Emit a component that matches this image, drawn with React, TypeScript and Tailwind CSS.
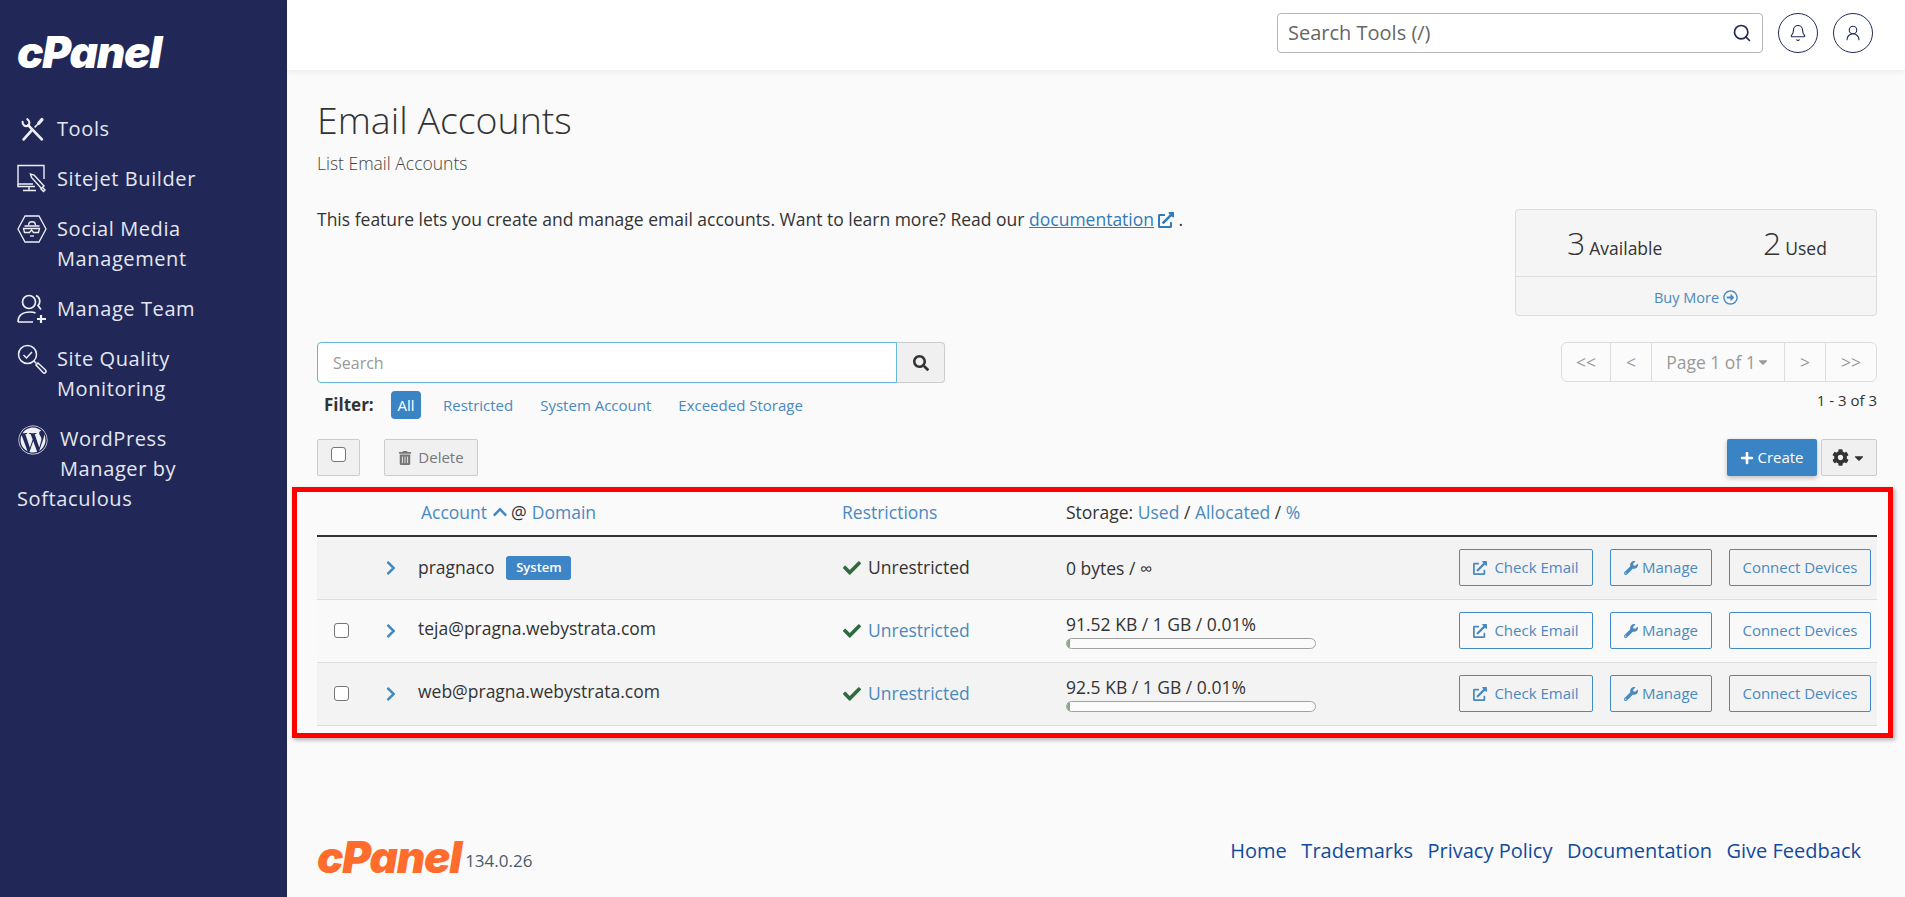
import { Bell, Search, UserRound } from "lucide-react";
import {
  FaCaretDown,
  FaCheck,
  FaChevronRight,
  FaChevronUp,
  FaCog,
  FaExternalLinkAlt,
  FaPlus,
  FaRegArrowAltCircleRight,
  FaSearch,
  FaTrashAlt,
  FaWordpress,
  FaWrench,
} from "react-icons/fa";

const font = "font-['Open_Sans',sans-serif]";

function ToolsIcon() {
  return (
    <svg viewBox="0 0 24 24" className="h-[25px] w-[25px]" fill="none" stroke="#eef0f6" strokeWidth="2" strokeLinecap="round">
      <path d="M8 8 21 21.500" strokeWidth="2.600" />
      <path d="M2.500 4.500c-.5 3 2.500 5.500 5.500 3.500 1.500-1.500 1.500-4-1-6" />
      <path d="M11 13 3.500 21.500" strokeWidth="2.600" />
      <path d="m14.500 9.500 3-3" strokeWidth="1.500" />
      <path d="m18 6 3-3.500" strokeWidth="3.200" />
    </svg>
  );
}

function SitejetIcon() {
  return (
    <svg viewBox="0 0 30 30" className="h-[30px] w-[30px]" fill="none" stroke="#eef0f6" strokeWidth="1.400">
      <path d="M27 15V1.500H1v18.500h15" />
      <path d="M1 20v2.500h17M12 23v3M6 26.500h13" />
      <path d="m17 11 10 11-2.500 2.500-10-11-1-3.500z" />
      <path d="m25 23 3 3-1.500 1.500-3-3" />
    </svg>
  );
}

function SocialIcon() {
  return (
    <svg viewBox="0 0 30 28" className="h-[28px] w-[30px]" fill="none" stroke="#eef0f6" strokeWidth="1.300">
      <path d="M8 1h14l7 13-7 13H8L1 14z" />
      <path d="M11.500 10.500c0-5 7-5 7 0" />
      <path d="M7.500 11h15M6.500 13.500l1 4h5l2-2.500 2 2.500h5l1-4z" />
      <path d="M13 21h4" />
    </svg>
  );
}

function TeamIcon() {
  return (
    <svg viewBox="0 0 30 30" className="h-[30px] w-[30px]" fill="none" stroke="#eef0f6" strokeWidth="1.700">
      <circle cx="12" cy="8" r="6.500" />
      <path d="M19 1.500c4 1.500 5 7 2 10l3 4M1 28c0-7 5-10 12-10 2 0 4 .3 5.500 1M1 28h15" />
      <path d="M24 21v8M20 25h9" strokeWidth="2.200" />
    </svg>
  );
}

function QualityIcon() {
  return (
    <svg viewBox="0 0 30 30" className="h-[30px] w-[30px]" fill="none" stroke="#eef0f6" strokeWidth="1.500">
      <circle cx="10.500" cy="10.500" r="9" />
      <path d="m6.500 11 3 3 5.500-6" />
      <path d="m17 17 2.500 2.500" />
      <path d="m19 21 2-2 7.500 7a1.500 1.500 0 0 1-2.500 2.500z" />
    </svg>
  );
}

function NavItem({ icon, lines }: { icon: React.ReactNode; lines: string[] }) {
  return (
    <div>
      <div className="float-left flex h-[30px] w-[40px] items-center">{icon}</div>
      <div className="pl-[40px]">
        {lines.map((line) => (
          <div key={line}>{line}</div>
        ))}
      </div>
    </div>
  );
}

function Sidebar() {
  return (
    <aside className="w-[287px] shrink-0 bg-[#212857] pl-[17px] pt-[29px] text-[20px] leading-[30px] tracking-[0.6px] text-[#e4e7f1]">
      <div className="h-[85.400px] font-['Inter',sans-serif] text-[44px] font-black italic leading-[46px] tracking-[-1.2px] text-white">
        cPanel
      </div>
      <nav className="flex flex-col gap-[20px]">
        <NavItem icon={<span className="ml-[3px]"><ToolsIcon /></span>} lines={["Tools"]} />
        <NavItem icon={<SitejetIcon />} lines={["Sitejet Builder"]} />
        <NavItem icon={<SocialIcon />} lines={["Social Media", "Management"]} />
        <NavItem icon={<TeamIcon />} lines={["Manage Team"]} />
        <NavItem icon={<QualityIcon />} lines={["Site Quality", "Monitoring"]} />
        <div>
          <div className="float-left mr-[11px] flex h-[60px] w-[32px] items-start pl-[1px] pt-[1px]">
            <FaWordpress className="text-[30px] text-[#eef0f6]" />
          </div>
          WordPress
          <br />
          Manager by
          <br />
          Softaculous
        </div>
      </nav>
    </aside>
  );
}

function Header() {
  return (
    <header className="flex h-[70px] shrink-0 items-center justify-end gap-[15px] bg-white pb-[4px] pr-[32px] shadow-[0_2px_6px_rgba(0,0,0,0.06)]">
      <div className="flex h-[40px] w-[486px] items-center justify-between rounded-[4px] border border-[#b5b5b5] pl-[10px] pr-[10px] text-[20px] text-[#666]">
        <span>Search Tools (/)</span>
        <Search className="size-[20px] text-[#222a5b]" strokeWidth={2} />
      </div>
      <button className="flex size-[40px] items-center justify-center rounded-full border border-[#222a5b] text-[#222a5b]">
        <Bell className="size-[18px]" strokeWidth={1.500} />
      </button>
      <button className="flex size-[40px] items-center justify-center rounded-full border border-[#222a5b] text-[#222a5b]">
        <UserRound className="size-[18px]" strokeWidth={1.500} />
      </button>
    </header>
  );
}

function OutlineButton({ children, width }: { children: React.ReactNode; width: string }) {
  return (
    <button className={`flex h-[37px] items-center justify-center gap-[4px] rounded-[2px] border border-[#428bca] text-[15px] text-[#4a89c0] ${width}`}>
      {children}
    </button>
  );
}

interface Account {
  name: string;
  system?: boolean;
  usage: string;
  bar?: boolean;
}

const accounts: Account[] = [
  { name: "pragnaco", system: true, usage: "0 bytes / ∞" },
  { name: "teja@pragna.webystrata.com", usage: "91.52 KB / 1 GB / 0.01%", bar: true },
  { name: "web@pragna.webystrata.com", usage: "92.5 KB / 1 GB / 0.01%", bar: true },
];

function AccountRow({ account, index }: { account: Account; index: number }) {
  return (
    <div
      className={`flex h-[63px] items-center border-b border-[#dedede] last:border-b-0 ${index % 2 === 0 ? "bg-[#f3f3f3]" : "bg-[#f9f9f9]"}`}
    >
      <div className="flex w-[66px] justify-center pb-[2px] pr-[18px]">
        {!account.system && <span className="mr-[-1px] h-[15px] w-[15px] rounded-[3px] border border-[#767676] bg-white" />}
      </div>
      <div className="w-[35px]">
        <FaChevronRight className="text-[16px] text-[#3f87c5]" />
      </div>
      <div className={`flex w-[425px] items-center text-[17.500px] text-[#333] ${account.system ? "pb-[2px]" : "pb-[5px]"}`}>
        {account.name}
        {account.system && (
          <span className="ml-[12px] mt-[2px] flex h-[24px] w-[65px] items-center justify-center rounded-[3px] bg-[#3d85c6] text-[13px] font-semibold text-white">
            System
          </span>
        )}
      </div>
      <div className="flex w-[223px] items-center gap-[7px] pb-[1px] text-[17.500px]">
        <FaCheck className="text-[18px] text-[#2f6b3c]" />
        <span className={account.system ? "text-[#333]" : "text-[#4a89c0]"}>Unrestricted</span>
      </div>
      <div className="w-[393px] text-[17.500px] leading-[20px] text-[#333]">
        <div className={account.bar ? "" : "-mt-[1px]"}>{account.usage}</div>
        {account.bar && (
          <div className="mt-[4px] h-[11px] w-[250px] overflow-hidden rounded-[6px] border border-[#a0a0a0] bg-[#fbfbfb]">
            <div className="h-full w-[3px] bg-[#7fae7f]" />
          </div>
        )}
      </div>
      <div className="-mt-[1px] flex items-center gap-[17px]">
        <OutlineButton width="w-[134px]">
          <FaExternalLinkAlt className="text-[14px]" />
          <span className="ml-[3px]">Check Email</span>
        </OutlineButton>
        <OutlineButton width="w-[102px]">
          <FaWrench className="text-[14px]" />
          Manage
        </OutlineButton>
        <OutlineButton width="w-[142px]">Connect Devices</OutlineButton>
      </div>
    </div>
  );
}

function AccountsTable() {
  return (
    <div className="relative mt-[16px]">
      <div className="flex h-[45px] items-center border-b-2 border-[#333] pb-[3px] text-[17.500px] text-[#4a89c0]">
        <div className="flex w-[525px] items-center pl-[104px]">
          Account
          <FaChevronUp className="ml-[5px] text-[16px] text-[#3f87c5]" />
          <span className="ml-[3px] text-[#333]">@</span>
          <span className="ml-[5px]">Domain</span>
        </div>
        <div className="w-[224px]">Restrictions</div>
        <div>
          <span className="text-[#333]">Storage: </span>Used<span className="text-[#333]"> / </span>Allocated
          <span className="text-[#333]"> / </span>%
        </div>
      </div>
      {accounts.map((account, index) => (
        <AccountRow key={account.name} account={account} index={index} />
      ))}
      <div className="pointer-events-none absolute -bottom-[12px] -left-[25px] -right-[16px] -top-[5px] border-[5px] border-[#f00] shadow-[2px_2px_4px_rgba(0,0,0,0.3)]" />
    </div>
  );
}

function Pagination() {
  return (
    <div className="flex h-[40px] rounded-[6px] border border-[#ddd] bg-[#fbfbfb] text-[17.500px] text-[#999]">
      <div className="flex w-[49px] items-center justify-center border-r border-[#ddd]">&lt;&lt;</div>
      <div className="flex w-[41px] items-center justify-center border-r border-[#ddd]">&lt;</div>
      <div className="flex w-[133px] items-center justify-center border-r border-[#ddd]">
        Page 1 of 1<FaCaretDown className="text-[14px]" />
      </div>
      <div className="flex w-[41px] items-center justify-center border-r border-[#ddd]">&gt;</div>
      <div className="flex w-[50px] items-center justify-center">&gt;&gt;</div>
    </div>
  );
}

function Footer() {
  return (
    <footer className="mt-auto flex h-[64px] justify-between pl-[30px] pr-[44px] pt-[1px]">
      <div className="flex items-start">
        <span className="font-['Inter',sans-serif] text-[44px] font-black italic leading-[46px] tracking-[-1.2px] text-[#ff6c2c]">cPanel</span>
        <span className="ml-[4px] mt-[15px] text-[17px] leading-[24px] text-[#4b5a6b]">134.0.26</span>
      </div>
      <div className="flex gap-[14.500px] pt-[5px] text-[20px] leading-[24px] text-[#124a9c]">
        <span>Home</span>
        <span>Trademarks</span>
        <span>Privacy Policy</span>
        <span>Documentation</span>
        <span>Give Feedback</span>
      </div>
    </footer>
  );
}

export default function App() {
  return (
    <div className={`flex h-screen overflow-hidden bg-[#fafafa] ${font}`}>
      <Sidebar />
      <main className="flex min-w-0 flex-1 flex-col">
        <Header />
        <div className="pl-[30px] pr-[28px]">
          <h1 className="mt-[30px] text-[37.500px] font-light leading-[40px] text-[#333]">Email Accounts</h1>
          <p className="mt-[13px] text-[17.500px] font-light leading-[20px] text-[#444]">List Email Accounts</p>

          <div className="mt-[36px] flex items-start justify-between">
            <p className="text-[17.500px] leading-[20px] text-[#333]">
              This feature lets you create and manage email accounts. Want to learn more? Read our{" "}
              <span className="text-[#337ab7] underline">documentation</span>
              <FaExternalLinkAlt className="ml-[4px] inline text-[16px] align-[-2px] text-[#337ab7]" /> .
            </p>
            <div className="h-[107px] w-[362px] rounded-[4px] border border-[#ddd] bg-[#f5f5f5]">
              <div className="flex h-[67px] items-center border-b border-[#ddd] text-[17.500px] text-[#333]">
                <div className="ml-[51px] flex w-[196px] items-baseline">
                  <span className="mr-[4px] text-[32px] font-light leading-[40px]">3</span>Available
                </div>
                <div className="flex items-baseline">
                  <span className="mr-[4px] text-[32px] font-light leading-[40px]">2</span>Used
                </div>
              </div>
              <div className="flex h-[38px] items-center justify-center gap-[4px] pt-[3px] text-[14.500px] text-[#4a89c0]">
                Buy More <FaRegArrowAltCircleRight className="text-[15px]" />
              </div>
            </div>
          </div>

          <div className="mt-[26px] flex items-start justify-between">
            <div>
              <div className="flex h-[41px]">
                <div className="flex w-[580px] items-center rounded-l-[4px] border border-[#66b7dc] bg-white pl-[15px] text-[16px] text-[#999]">Search</div>
                <div className="flex w-[48px] items-center justify-center rounded-r-[4px] border border-l-0 border-[#ccc] bg-[#f0f0f0] text-[#333]">
                  <FaSearch className="text-[16px]" />
                </div>
              </div>
              <div className="mt-[8px] flex h-[28px] items-center text-[15px] text-[#4a89c0]">
                <span className="ml-[7px] w-[67px] text-[17px] font-bold text-[#333]">Filter:</span>
                <span className="flex h-[28px] w-[30px] items-center justify-center rounded-[4px] bg-[#3a83c4] text-white">All</span>
                <span className="ml-[22px]">Restricted</span>
                <span className="ml-[27px]">System Account</span>
                <span className="ml-[27px]">Exceeded Storage</span>
              </div>
            </div>
            <div className="flex flex-col items-end">
              <Pagination />
              <div className="mt-[8px] text-[15px] leading-[20px] text-[#333]">1 - 3 of 3</div>
            </div>
          </div>

          <div className="mt-[20px] flex h-[37px] items-stretch justify-between">
            <div className="flex gap-[24px]">
              <div className="flex w-[43px] justify-center rounded-[2px] border border-[#ccc] bg-[#f0f0f0] pt-[7px]">
                <span className="h-[15px] w-[15px] rounded-[3px] border border-[#767676] bg-white" />
              </div>
              <div className="flex w-[94px] items-center justify-center gap-[6px] rounded-[2px] border border-[#ccc] bg-[#f0f0f0] text-[15px] text-[#777]">
                <FaTrashAlt className="text-[14px]" />
                Delete
              </div>
            </div>
            <div className="flex gap-[4px]">
              <div className="flex w-[90px] items-center justify-center gap-[3px] rounded-[2px] bg-[#3a83c4] text-[15px] text-white shadow-[0_2px_5px_rgba(0,0,0,0.25)]">
                <FaPlus className="text-[14px]" />
                Create
              </div>
              <div className="flex w-[56px] items-center justify-center gap-[3px] rounded-[2px] border border-[#ccc] bg-[#f0f0f0] text-[#333]">
                <FaCog className="text-[17px]" />
                <FaCaretDown className="text-[14px]" />
              </div>
            </div>
          </div>

          <AccountsTable />
        </div>
        <Footer />
      </main>
    </div>
  );
}
